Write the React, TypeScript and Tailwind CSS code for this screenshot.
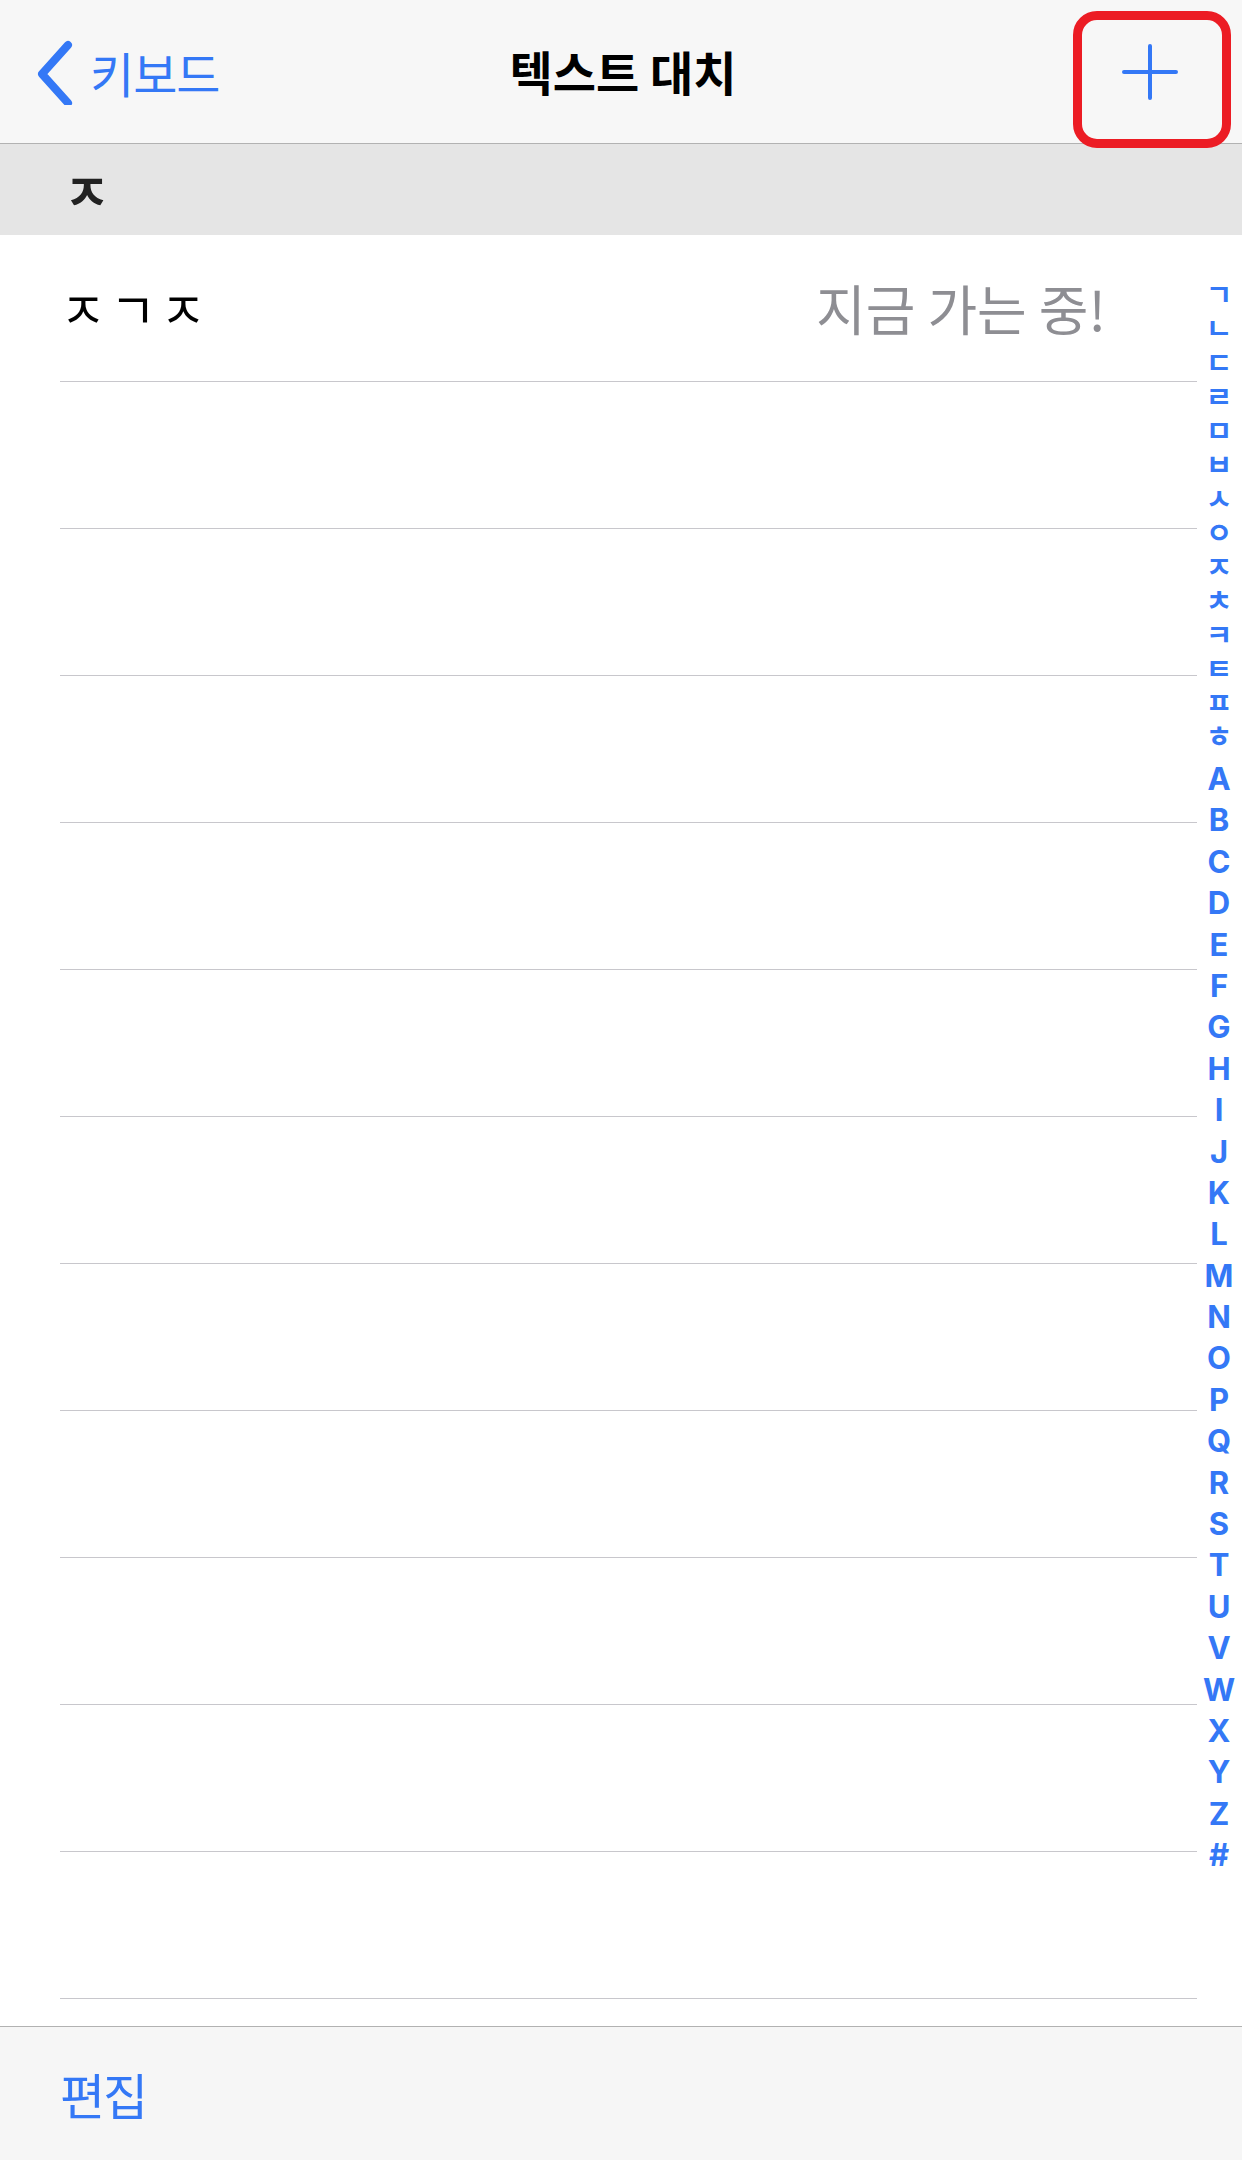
import { Fragment } from 'react';

const KO = "font-['Noto_Sans_CJK_KR','Noto_Sans',sans-serif]";

const jamo = ['ㄱ', 'ㄴ', 'ㄷ', 'ㄹ', 'ㅁ', 'ㅂ', 'ㅅ', 'ㅇ', 'ㅈ', 'ㅊ', 'ㅋ', 'ㅌ', 'ㅍ', 'ㅎ'];
const latin = 'ABCDEFGHIJKLMNOPQRSTUVWXYZ#'.split('');

// 12 rows in the list, only the first has content
const rows = [
  { key: 'ㅈㄱㅈ', value: '지금 가는 중!' },
  ...Array.from({ length: 11 }, () => ({ key: '', value: '' })),
];

function Row({ k, v }: { k: string; v: string }) {
  return (
    <div className="h-[147px] pl-[60px] flex flex-col">
      <div className="flex-1 flex items-center justify-between pr-[136px]">
        <span className={`${KO} text-[50px] text-black tracking-[4px]`}>{k}</span>
        <span className={`${KO} text-[54px] text-[#8e8e93] tracking-[0px]`}>{v}</span>
      </div>
      <div className="h-[1.5px] bg-[#c8c7cc] mr-[45px]" />
    </div>
  );
}

export default function App() {
  return (
    <div className="relative w-[1242px] h-[2160px] bg-white flex flex-col overflow-hidden">
      {/* nav bar */}
      <div className="h-[144px] shrink-0 bg-[#f7f7f7] border-b-[1.5px] border-[#b2b2b2] flex items-center relative">
        <div className="flex items-center pl-[34px] gap-[12px] text-[#3478f6]">
          <svg width="44" height="66" viewBox="0 0 44 66" fill="none">
            <polyline
              points="34,6 8,35 34,64"
              stroke="#3478f6"
              strokeWidth="8"
              strokeLinecap="round"
              strokeLinejoin="round"
            />
          </svg>
          <span className={`${KO} text-[48px] tracking-[-1px] leading-none`}>키보드</span>
        </div>
        <div className="absolute inset-0 flex items-center justify-center pointer-events-none">
          <span className={`${KO} text-[47px] font-bold tracking-[0px] text-black pl-[4px]`}>
            텍스트 대치
          </span>
        </div>
        <div className="ml-auto mr-[64px]">
          <svg width="56" height="56" viewBox="0 0 56 56">
            <path d="M28 2 V54 M2 28 H54" stroke="#3478f6" strokeWidth="4" strokeLinecap="round" />
          </svg>
        </div>
      </div>

      {/* red highlight around the add button */}
      <div className="absolute left-[1073px] top-[11px] w-[158px] h-[137px] border-[9px] border-[#ec1c24] rounded-[24px]" />

      {/* section header */}
      <div className="h-[91px] shrink-0 bg-[#e5e5e5] flex items-center pl-[64px]">
        <span className={`${KO} text-[50px] font-bold text-[#222]`}>ㅈ</span>
      </div>

      {/* list */}
      <div className="flex flex-col">
        {rows.map((r, i) => (
          <Fragment key={i}>
            <Row k={r.key} v={r.value} />
          </Fragment>
        ))}
      </div>

      <div className="flex-1" />

      {/* toolbar */}
      <div className="h-[134px] shrink-0 bg-[#f6f6f6] border-t-[1.5px] border-[#b2b2b2] flex items-center pl-[60px]">
        <span className={`${KO} text-[49px] text-[#3478f6] tracking-[-2px]`}>편집</span>
      </div>

      {/* section index */}
      <div className="absolute right-0 top-[276px] w-[46px] flex flex-col items-center text-[#3478f6]">
        {jamo.map((j) => (
          <div key={j} className={`${KO} text-[29px] font-bold leading-[34px] h-[34px]`}>
            {j}
          </div>
        ))}
        <div className="mt-[6px] flex flex-col items-center">
          {latin.map((l) => (
            <div
              key={l}
              className="font-['Inter',sans-serif] font-bold text-[31px] leading-[41.4px] h-[41.4px]"
            >
              {l}
            </div>
          ))}
        </div>
      </div>
    </div>
  );
}
